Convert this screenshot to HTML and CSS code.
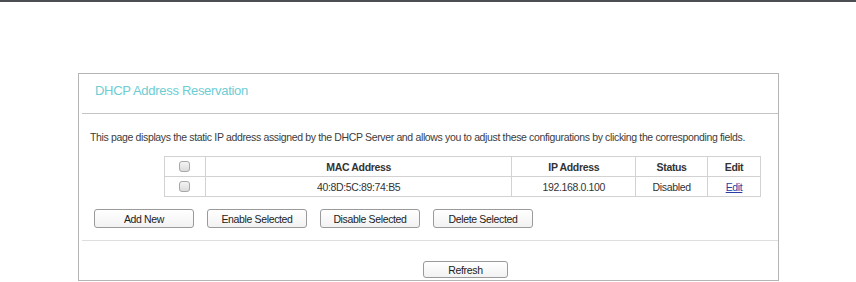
FILE: index.html
```html
<!DOCTYPE html>
<html lang="en">
<head>
    <meta charset="UTF-8">
    <title>DHCP Address Reservation</title>
    <link rel="stylesheet" href="styles.css">
</head>
<body>
    <div class="top-bar"></div>

    <!-- Reservation panel -->
    <div class="panel">
        <div class="panel-head">
            <h2>DHCP Address Reservation</h2>
        </div>

        <p class="desc">This page displays the static IP address assigned by the DHCP Server and allows you to adjust these configurations by clicking the corresponding fields.</p>

        <table class="list">
            <tr>
                <th class="col-check"><input type="checkbox"></th>
                <th class="col-mac">MAC Address</th>
                <th class="col-ip">IP Address</th>
                <th class="col-status">Status</th>
                <th class="col-edit">Edit</th>
            </tr>
            <tr>
                <td><input type="checkbox"></td>
                <td>40:8D:5C:89:74:B5</td>
                <td>192.168.0.100</td>
                <td>Disabled</td>
                <td><a href="#">Edit</a></td>
            </tr>
        </table>

        <div class="actions">
            <button type="button">Add New</button>
            <button type="button">Enable Selected</button>
            <button type="button">Disable Selected</button>
            <button type="button">Delete Selected</button>
        </div>

        <div class="panel-foot">
            <button type="button" class="refresh">Refresh</button>
        </div>
    </div>
</body>
</html>
```

FILE: styles.css
```css
* {
    margin: 0;
    padding: 0;
    box-sizing: border-box;
}

body {
    font-family: "Liberation Sans", Arial, sans-serif;
    font-size: 10.5px;
    letter-spacing: -0.35px;
    background-color: #fff;
    color: #333;
}

.top-bar {
    height: 2px;
    background-color: #4b4e53;
}

/* Panel */
.panel {
    width: 701px;
    height: 208px;
    margin: 71px 0 0 78px;
    border: 1px solid #b5b5b5;
}

.panel-head {
    height: 40px;
    margin-left: 3px;
    padding: 9px 0 0 13px;
    border-bottom: 1px solid #c4c4c4;
}

.panel-head h2 {
    font-size: 13px;
    font-weight: normal;
    letter-spacing: -0.3px;
    line-height: 15px;
    color: #6ccdd4;
}

.desc {
    margin: 17px 0 0 11px;
    line-height: 13px;
    color: #3c3c3c;
}

/* Table */
.list {
    width: 597px;
    margin: 12px 0 0 85px;
    border-collapse: collapse;
    font-size: 10.5px;
    color: #333;
}

.list th,
.list td {
    height: 20px;
    padding: 0;
    border: 1px solid #d2d2d2;
    text-align: center;
    vertical-align: middle;
}

.list th {
    font-weight: bold;
}

.col-check { width: 41px; }
.col-mac { width: 307px; }
.col-ip { width: 124px; }
.col-status { width: 72px; }
.col-edit { width: 53px; }

.list a {
    color: #2b3ea6;
}

.list input[type="checkbox"] {
    appearance: none;
    -webkit-appearance: none;
    display: block;
    width: 11px;
    height: 11px;
    margin: 0 auto;
    border: 1px solid #a8a8a8;
    border-radius: 3px;
    background: linear-gradient(#f4f4f4, #dcdcdc);
}

/* Buttons */
.actions {
    display: flex;
    gap: 13px;
    margin: 12px 0 0 15px;
}

button {
    width: 100px;
    height: 19px;
    font-family: "Liberation Sans", Arial, sans-serif;
    font-size: 10.5px;
    letter-spacing: -0.35px;
    color: #222;
    background: linear-gradient(#ffffff, #f2f2f2);
    border: 1px solid #9a9a9a;
    border-radius: 3px;
}

.panel-foot {
    margin: 12px 0 0 3px;
    padding: 20px 0 0 341px;
    border-top: 1px solid #dedede;
}

.refresh {
    width: 85px;
    height: 17px;
}
```
